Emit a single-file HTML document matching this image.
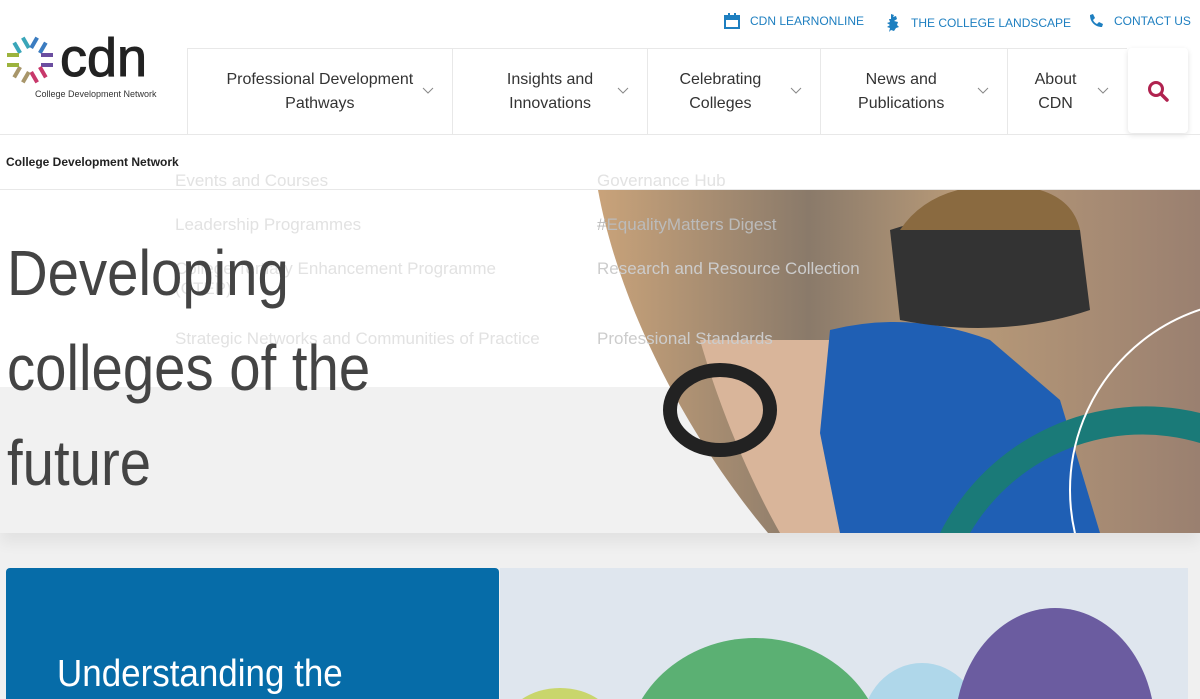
<!DOCTYPE html>
<html><head><meta charset="utf-8"><style>
*{margin:0;padding:0;box-sizing:border-box}
html,body{width:1200px;height:699px;overflow:hidden}
body{background:#f0f0f0;font-family:"Liberation Sans",sans-serif;position:relative}
.top{position:absolute;left:0;top:0;width:1200px;height:190px;background:#fff}
.tl{position:absolute;top:13px;font-size:12px;color:#1e7fc0;display:flex;align-items:center;gap:10px;white-space:nowrap}
.nav{position:absolute;left:187px;top:48px;height:87px;width:940px;border:1px solid #e8e8e8;border-right:none;display:flex}
.nav div{position:relative;border-right:1px solid #e8e8e8;display:flex;align-items:center;justify-content:center;text-align:center;font-size:16px;line-height:24px;color:#333}
.nav div svg{position:absolute;right:18px;top:38px}
.search{position:absolute;left:1128px;top:48px;width:60px;height:85px;background:#fff;border-radius:4px;box-shadow:0 2px 6px rgba(0,0,0,.12)}
.hl{position:absolute;left:0;width:1200px;height:1px;background:#e8e8e8}
.ghost{position:absolute;font-size:17px;color:#e2e2e2;white-space:nowrap}
.hero{position:absolute;left:0;top:190px;width:1200px;height:343px;overflow:hidden;background:linear-gradient(#fff 0,#fff 197px,#f1f1f1 197px);box-shadow:0 10px 14px rgba(0,0,0,.06)}
.h1{position:absolute;left:7px;top:226px;font-size:64px;line-height:95px;color:#444;transform:scaleX(.88);transform-origin:left;white-space:nowrap}
</style></head><body>
<div class="top"></div>
<div class="tl" style="left:724px"><svg width="16" height="16" viewBox="0 0 16 16"><rect x="1" y="3" width="14" height="12" fill="none" stroke="#1e7fc0" stroke-width="2"/><rect x="1" y="3" width="14" height="4" fill="#1e7fc0"/><rect x="4" y="0" width="2" height="4" fill="#1e7fc0"/><rect x="10" y="0" width="2" height="4" fill="#1e7fc0"/></svg>CDN LEARNONLINE</div>
<div class="tl" style="left:885px"><svg width="16" height="20" viewBox="0 0 16 20"><path d="M6 1l3 1-1 2 3-1 1 3-3 2 4 1-1 3 2 2-3 1-2 3-3-1-2 2 1-4-3-1 3-2-3-2 3-1-1-3 2 0z" fill="#1e7fc0"/></svg>THE COLLEGE LANDSCAPE</div>
<div class="tl" style="left:1088px"><svg width="16" height="16" viewBox="0 0 16 16"><path d="M2 2l3-1 2 4-2 2c1 2 2 3 4 4l2-2 4 2-1 3c-7 0-12-5-12-12z" fill="#1e7fc0"/></svg>CONTACT US</div>

<svg style="position:absolute;left:6px;top:36px" width="48" height="48" viewBox="-24 -24 48 48">
<g stroke-width="4" fill="none" stroke-linecap="butt">
<g transform="rotate(-30)" stroke="#3aa6b9"><path d="M-5-23L-5-11M5-23L5-11"/></g>
<g transform="rotate(30)" stroke="#3b7cc0"><path d="M-5-23L-5-11M5-23L5-11"/></g>
<g transform="rotate(90)" stroke="#6b4ea0"><path d="M-5-23L-5-11M5-23L5-11"/></g>
<g transform="rotate(150)" stroke="#c8386b"><path d="M-5-23L-5-11M5-23L5-11"/></g>
<g transform="rotate(210)" stroke="#a8966a"><path d="M-5-23L-5-11M5-23L5-11"/></g>
<g transform="rotate(270)" stroke="#9cb33d"><path d="M-5-23L-5-11M5-23L5-11"/></g>
</g></svg>
<div style="position:absolute;left:60px;top:28px;font-size:54px;color:#222;line-height:60px;letter-spacing:0;-webkit-text-stroke:1px #222">cdn</div>
<div style="position:absolute;left:35px;top:89px;font-size:9px;color:#333">College Development Network</div>

<div class="nav">
<div style="width:265px">Professional Development<br>Pathways<svg width="12" height="8"><path d="M1 1l5 5 5-5" stroke="#888" fill="none"/></svg></div>
<div style="width:196px">Insights and<br>Innovations<svg width="12" height="8"><path d="M1 1l5 5 5-5" stroke="#888" fill="none"/></svg></div>
<div style="width:173px;padding-right:28px">Celebrating<br>Colleges<svg width="12" height="8"><path d="M1 1l5 5 5-5" stroke="#888" fill="none"/></svg></div>
<div style="width:187px;padding-right:26px">News and<br>Publications<svg width="12" height="8"><path d="M1 1l5 5 5-5" stroke="#888" fill="none"/></svg></div>
<div style="width:119px;border-right:none;padding-right:24px">About<br>CDN<svg width="12" height="8"><path d="M1 1l5 5 5-5" stroke="#888" fill="none"/></svg></div>
</div>
<div class="search"><svg style="position:absolute;left:19px;top:32px" width="22" height="22" viewBox="0 0 22 22"><circle cx="9" cy="9" r="6.5" stroke="#b0224f" stroke-width="3" fill="none"/><path d="M14 14l6 6" stroke="#b0224f" stroke-width="3.5" stroke-linecap="round"/></svg></div>
<div class="hl" style="top:134px"></div>
<div style="position:absolute;left:6px;top:155px;font-size:12px;font-weight:bold;color:#222">College Development Network</div>

<div class="hero">
<svg style="position:absolute;left:0;top:0" width="1200" height="343">
<defs><linearGradient id="g" x1="0" y1="0" x2="1" y2="0"><stop offset="0" stop-color="#c9a37a"/><stop offset=".35" stop-color="#8a7a6a"/><stop offset=".6" stop-color="#b89a78"/><stop offset="1" stop-color="#9a8070"/></linearGradient></defs>
<path d="M598 0H1200V343H768C690 250 620 120 598 0Z" fill="url(#g)"/>
<path d="M700 150l160 0 40 193H780C750 290 720 220 700 150Z" fill="#d9b59a"/>
<path d="M830 140q80-20 160 10l70 60 40 133H840l-20-100z" fill="#1f5fb4"/>
<path d="M890 40q90-30 190 0l10 80q-90 30-190 10z" fill="#333"/>
<path d="M900 40q30-45 100-45t80 45z" fill="#8a6a40"/>
<ellipse cx="720" cy="220" rx="50" ry="40" fill="none" stroke="#222" stroke-width="14"/>
<path d="M940 343a230 230 0 0 1 260-120v30a200 200 0 0 0-230 90z" fill="#1a7a78"/>
<circle cx="1260" cy="300" r="190" fill="none" stroke="#fff" stroke-width="2"/>
</svg>
</div>
<div class="hl" style="top:189px"></div>
<div class="ghost" style="left:175px;top:171px">Events and Courses</div>
<div class="ghost" style="left:175px;top:215px">Leadership Programmes</div>
<div class="ghost" style="left:175px;top:259px">College Tertiary Enhancement Programme<br>(CTEP)</div>
<div class="ghost" style="left:175px;top:329px">Strategic Networks and Communities of Practice</div>
<div class="ghost" style="left:597px;top:171px">Governance Hub</div>
<div class="ghost" style="left:597px;top:215px;color:#bbb">#EqualityMatters Digest</div>
<div class="ghost" style="left:597px;top:259px;color:#ccc">Research and Resource Collection</div>
<div class="ghost" style="left:597px;top:329px;color:#ccc">Professional Standards</div>
<div class="h1">Developing<br>colleges of the<br>future</div>

<div style="position:absolute;left:6px;top:568px;width:493px;height:131px;background:#066ca8;border-radius:4px 4px 0 0"></div>
<div style="position:absolute;left:57px;top:652px;font-size:38px;line-height:44px;color:#fff;transform:scaleX(.92);transform-origin:left;white-space:nowrap">Understanding the</div>
<div style="position:absolute;left:500px;top:568px;width:688px;height:131px;background:#dfe6ee;overflow:hidden">
<svg width="688" height="131"><ellipse cx="60" cy="160" rx="55" ry="40" fill="#c9d66c"/><ellipse cx="255" cy="190" rx="130" ry="120" fill="#5bb073"/><ellipse cx="422" cy="160" rx="60" ry="65" fill="#afd7ea"/><ellipse cx="555" cy="160" rx="100" ry="120" fill="#6b5ca0"/></svg>
</div>
</body></html>
